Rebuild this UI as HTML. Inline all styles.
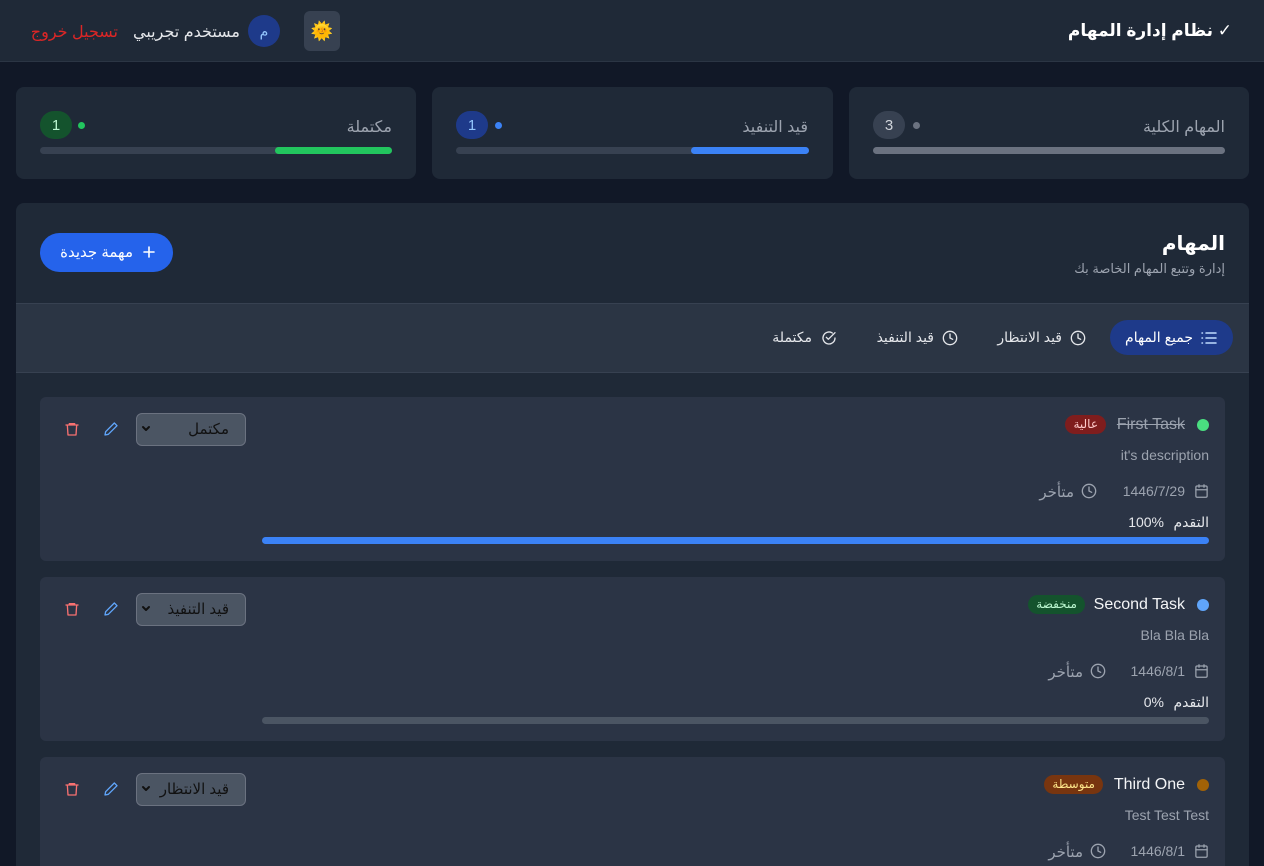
<!DOCTYPE html>
<html><head><meta charset="utf-8"><style>
*{box-sizing:border-box;margin:0;padding:0}
html,body{width:1264px;height:866px;overflow:hidden}
body{background:#111827;font-family:"Liberation Sans","DejaVu Sans",sans-serif;color:#e5e7eb;position:relative}
.a{position:absolute}
.r{direction:rtl;white-space:nowrap}
.hdr{left:0;top:0;width:1264px;height:62px;background:#1f2937;border-bottom:1px solid #2b3544}
.card{background:#1f2937;border-radius:8px}
.bar{height:7px;border-radius:4px;background:#374151}
.badge{width:32px;height:28px;border-radius:14px;text-align:center;line-height:29px;font-size:15px}
.dot{width:7px;height:7px;border-radius:50%}
.task{left:40px;width:1185px;height:164px;background:#2b3445;border-radius:6px}
.sel{left:96px;top:16px;width:110px;height:33px;border:1px solid #6b7280;background:#4b5563;border-radius:6px;color:#111;font-size:15px;line-height:31px;padding-right:16px}
.pri{height:19px;border-radius:10px;font-size:12px;line-height:19px;padding:0 8px}
svg{position:absolute;fill:none;stroke-linecap:round;stroke-linejoin:round}
</style></head><body>
<div class="a hdr"></div>
<div class="a r" style="right:32px;top:21px;font-size:17px;font-weight:bold;color:#fff">✓ نظام إدارة المهام</div>
<div class="a" style="left:304px;top:11px;width:36px;height:40px;background:#374151;border-radius:6px;text-align:center;line-height:40px;font-size:18px">🌞</div>
<div class="a" style="left:248px;top:15px;width:32px;height:32px;border-radius:50%;background:#1e3a8a;color:#93c5fd;text-align:center;line-height:32px;font-size:14px">م</div>
<div class="a r" style="right:1024px;top:22px;font-size:16px;color:#e5e7eb">مستخدم تجريبي</div>
<div class="a r" style="right:1146px;top:22px;font-size:16px;color:#dc2626">تسجيل خروج</div>

<!-- stats -->
<div class="a card" style="left:849px;top:87px;width:400px;height:92px"></div>
<div class="a r" style="right:39px;top:117px;font-size:16px;color:#9ca3af">المهام الكلية</div>
<div class="a dot" style="left:913px;top:122px;background:#6b7280"></div>
<div class="a badge" style="left:873px;top:111px;background:#374151;color:#d1d5db">3</div>
<div class="a bar" style="left:873px;top:147px;width:352px;background:#6b7280"></div>

<div class="a card" style="left:432px;top:87px;width:401px;height:92px"></div>
<div class="a r" style="right:456px;top:117px;font-size:16px;color:#9ca3af">قيد التنفيذ</div>
<div class="a dot" style="left:495px;top:122px;background:#3b82f6"></div>
<div class="a badge" style="left:456px;top:111px;background:#1e3a8a;color:#93c5fd">1</div>
<div class="a bar" style="left:456px;top:147px;width:353px"></div>
<div class="a bar" style="left:691px;top:147px;width:118px;background:#3b82f6"></div>

<div class="a card" style="left:16px;top:87px;width:400px;height:92px"></div>
<div class="a r" style="right:872px;top:117px;font-size:16px;color:#9ca3af">مكتملة</div>
<div class="a dot" style="left:78px;top:122px;background:#22c55e"></div>
<div class="a badge" style="left:40px;top:111px;background:#14532d;color:#bbf7d0">1</div>
<div class="a bar" style="left:40px;top:147px;width:352px"></div>
<div class="a bar" style="left:275px;top:147px;width:117px;background:#22c55e"></div>

<!-- main -->
<div class="a card" style="left:16px;top:203px;width:1233px;height:663px;border-radius:8px 8px 0 0"></div>
<div class="a r" style="right:39px;top:231px;font-size:20px;font-weight:bold;color:#fff">المهام</div>
<div class="a r" style="right:39px;top:261px;font-size:13px;color:#9ca3af">إدارة وتتبع المهام الخاصة بك</div>
<div class="a r" style="left:40px;top:233px;width:133px;height:39px;border-radius:20px;background:#2563eb;color:#fff;font-size:15px;line-height:39px;padding-right:40px">مهمة جديدة</div>
<svg style="left:143px;top:246px" width="12" height="12" viewBox="0 0 12 12" stroke="#fff" stroke-width="1.6"><path d="M6 1v10M1 6h10"/></svg>

<div class="a" style="left:16px;top:303px;width:1233px;height:70px;background:#2b3544;border-top:1px solid #374151;border-bottom:1px solid #374151"></div>
<div class="a r" style="left:1110px;top:320px;width:123px;height:35px;border-radius:18px;background:#1e3a8a;color:#fff;font-size:14px;line-height:35px;padding-right:40px">جميع المهام</div>
<svg style="left:1201px;top:331px" width="16" height="14" viewBox="0 0 16 14" stroke="#bfdbfe" stroke-width="1.5"><path d="M5 2h10M5 7h10M5 12h10M1 2h.5M1 7h.5M1 12h.5"/></svg>
<div class="a r" style="right:202px;top:329px;font-size:14px;color:#e5e7eb">قيد الانتظار</div>
<svg style="left:1070px;top:330px" width="16" height="16" viewBox="0 0 24 24" stroke="#e5e7eb" stroke-width="2"><circle cx="12" cy="12" r="10"/><path d="M12 6v6l4 2"/></svg>
<div class="a r" style="right:330px;top:329px;font-size:14px;color:#e5e7eb">قيد التنفيذ</div>
<svg style="left:942px;top:330px" width="16" height="16" viewBox="0 0 24 24" stroke="#e5e7eb" stroke-width="2"><circle cx="12" cy="12" r="10"/><path d="M12 6v6l4 2"/></svg>
<div class="a r" style="right:452px;top:329px;font-size:14px;color:#e5e7eb">مكتملة</div>
<svg style="left:821px;top:330px" width="16" height="16" viewBox="0 0 24 24" stroke="#e5e7eb" stroke-width="2"><path d="M21 12a9 9 0 1 1-4-7.5"/><path d="M8 11l3 3 10-10"/></svg>

<!-- tasks -->
<div class="a task" style="top:397px">
 <div class="a dot" style="right:16px;top:22px;width:12px;height:12px;background:#4ade80"></div>
 <div class="a" style="right:40px;top:19px;font-size:16px;color:#9ca3af;text-decoration:line-through">First Task</div>
 <div class="a pri r" style="right:119px;top:18px;background:#7f1d1d;color:#fecaca">عالية</div>
 <div class="a" style="right:16px;top:50px;font-size:14px;color:#9ca3af">it's description</div>
 <div class="a" style="right:40px;top:86px;font-size:14px;color:#9ca3af">1446/7/29</div>
 <svg style="right:16px;top:86px" width="15" height="16" viewBox="0 0 24 24" stroke="#9ca3af" stroke-width="2"><rect x="3" y="4" width="18" height="18" rx="2"/><path d="M16 2v4M8 2v4M3 10h18"/></svg>
 <div class="a r" style="right:151px;top:86px;font-size:15px;color:#9ca3af">متأخر</div>
 <svg style="right:128px;top:86px" width="16" height="16" viewBox="0 0 24 24" stroke="#9ca3af" stroke-width="2"><circle cx="12" cy="12" r="10"/><path d="M12 6v6l4 2"/></svg>
 <div class="a r" style="right:16px;top:117px;font-size:14px;color:#e5e7eb">التقدم</div>
 <div class="a" style="right:61px;top:117px;font-size:14px;color:#e5e7eb">100%</div>
 <div class="a bar" style="right:16px;top:140px;width:947px;background:#3b82f6"></div>
 <div class="a sel r">مكتمل</div>
 <svg style="left:101px;top:28px" width="10" height="8" viewBox="0 0 10 8" stroke="#111" stroke-width="2"><path d="M2 2l3 3 3-3"/></svg>
 <svg style="left:63px;top:24px" width="16" height="16" viewBox="0 0 24 24" stroke="#60a5fa" stroke-width="2"><path d="M17 3l4 4L8 20l-5 1 1-5z"/></svg>
 <svg style="left:24px;top:24px" width="16" height="16" viewBox="0 0 24 24" stroke="#f87171" stroke-width="2"><path d="M3 6h18M8 6V4h8v2M5 6l1 15h12l1-15"/></svg>
</div>

<div class="a task" style="top:577px">
 <div class="a dot" style="right:16px;top:22px;width:12px;height:12px;background:#60a5fa"></div>
 <div class="a" style="right:40px;top:19px;font-size:16px;color:#f3f4f6">Second Task</div>
 <div class="a pri r" style="right:140px;top:18px;background:#14532d;color:#bbf7d0">منخفضة</div>
 <div class="a" style="right:16px;top:50px;font-size:14px;color:#9ca3af">Bla Bla Bla</div>
 <div class="a" style="right:40px;top:86px;font-size:14px;color:#9ca3af">1446/8/1</div>
 <svg style="right:16px;top:86px" width="15" height="16" viewBox="0 0 24 24" stroke="#9ca3af" stroke-width="2"><rect x="3" y="4" width="18" height="18" rx="2"/><path d="M16 2v4M8 2v4M3 10h18"/></svg>
 <div class="a r" style="right:142px;top:86px;font-size:15px;color:#9ca3af">متأخر</div>
 <svg style="right:119px;top:86px" width="16" height="16" viewBox="0 0 24 24" stroke="#9ca3af" stroke-width="2"><circle cx="12" cy="12" r="10"/><path d="M12 6v6l4 2"/></svg>
 <div class="a r" style="right:16px;top:117px;font-size:14px;color:#e5e7eb">التقدم</div>
 <div class="a" style="right:61px;top:117px;font-size:14px;color:#e5e7eb">0%</div>
 <div class="a bar" style="right:16px;top:140px;width:947px;background:#4b5563"></div>
 <div class="a sel r">قيد التنفيذ</div>
 <svg style="left:101px;top:28px" width="10" height="8" viewBox="0 0 10 8" stroke="#111" stroke-width="2"><path d="M2 2l3 3 3-3"/></svg>
 <svg style="left:63px;top:24px" width="16" height="16" viewBox="0 0 24 24" stroke="#60a5fa" stroke-width="2"><path d="M17 3l4 4L8 20l-5 1 1-5z"/></svg>
 <svg style="left:24px;top:24px" width="16" height="16" viewBox="0 0 24 24" stroke="#f87171" stroke-width="2"><path d="M3 6h18M8 6V4h8v2M5 6l1 15h12l1-15"/></svg>
</div>

<div class="a task" style="top:757px;height:109px;border-radius:6px 6px 0 0">
 <div class="a dot" style="right:16px;top:22px;width:12px;height:12px;background:#a16207"></div>
 <div class="a" style="right:40px;top:19px;font-size:16px;color:#f3f4f6">Third One</div>
 <div class="a pri r" style="right:122px;top:18px;background:#78350f;color:#fde68a">متوسطة</div>
 <div class="a" style="right:16px;top:50px;font-size:14px;color:#9ca3af">Test Test Test</div>
 <div class="a" style="right:40px;top:86px;font-size:14px;color:#9ca3af">1446/8/1</div>
 <svg style="right:16px;top:86px" width="15" height="16" viewBox="0 0 24 24" stroke="#9ca3af" stroke-width="2"><rect x="3" y="4" width="18" height="18" rx="2"/><path d="M16 2v4M8 2v4M3 10h18"/></svg>
 <div class="a r" style="right:142px;top:86px;font-size:15px;color:#9ca3af">متأخر</div>
 <svg style="right:119px;top:86px" width="16" height="16" viewBox="0 0 24 24" stroke="#9ca3af" stroke-width="2"><circle cx="12" cy="12" r="10"/><path d="M12 6v6l4 2"/></svg>
 <div class="a sel r">قيد الانتظار</div>
 <svg style="left:101px;top:28px" width="10" height="8" viewBox="0 0 10 8" stroke="#111" stroke-width="2"><path d="M2 2l3 3 3-3"/></svg>
 <svg style="left:63px;top:24px" width="16" height="16" viewBox="0 0 24 24" stroke="#60a5fa" stroke-width="2"><path d="M17 3l4 4L8 20l-5 1 1-5z"/></svg>
 <svg style="left:24px;top:24px" width="16" height="16" viewBox="0 0 24 24" stroke="#f87171" stroke-width="2"><path d="M3 6h18M8 6V4h8v2M5 6l1 15h12l1-15"/></svg>
</div>
</body></html>
